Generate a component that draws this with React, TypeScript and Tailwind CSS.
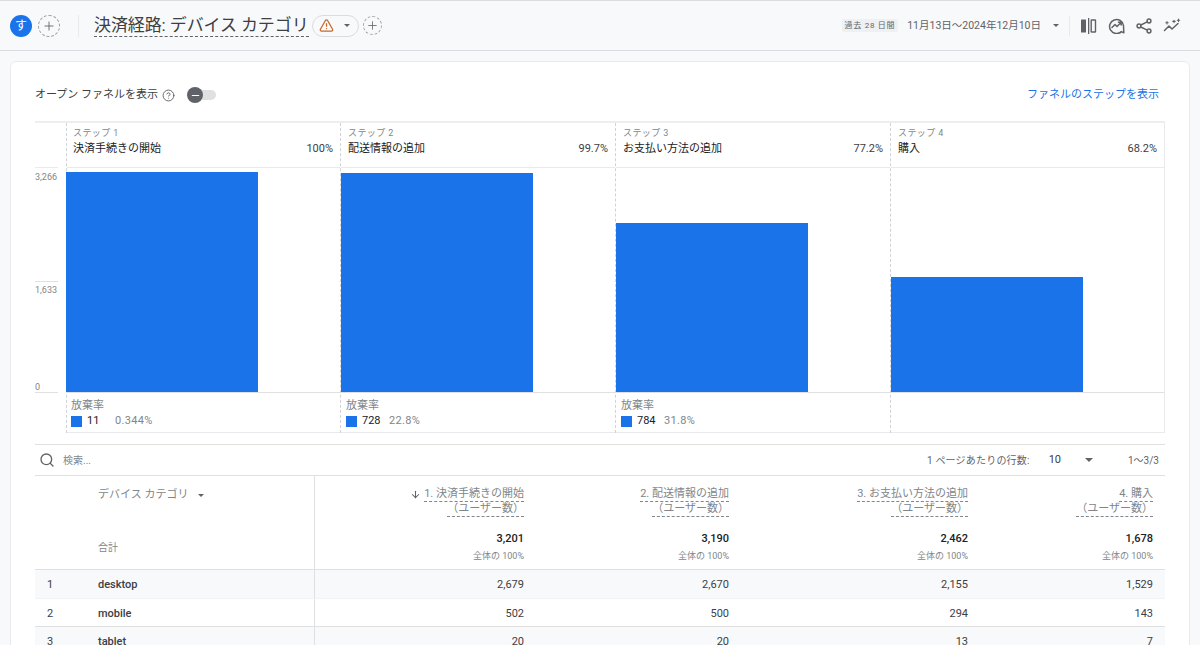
import React from "react";
import { Search, ArrowDown, Plus, TriangleAlert, CircleHelp, Minus } from "lucide-react";

const steps = [
  { no: 1, name: "決済手続きの開始", pct: "100%", top: 4, col: "w-[274px]", bar: "-ml-px", head: "pl-[6px]", foot: "pl-[4px]", gap: "ml-px", drop: { n: "11", p: "0.344%" } },
  { no: 2, name: "配送情報の追加", pct: "99.7%", top: 5, col: "w-[275px]", bar: "", head: "pl-[7px]", foot: "pl-[5px]", gap: "", drop: { n: "728", p: "22.8%" } },
  { no: 3, name: "お支払い方法の追加", pct: "77.2%", top: 55, col: "w-[275px]", bar: "", head: "pl-[7px]", foot: "pl-[5px]", gap: "", drop: { n: "784", p: "31.8%" } },
  { no: 4, name: "購入", pct: "68.2%", top: 109, col: "flex-1", bar: "", head: "pl-[7px]", foot: "pl-[5px]", gap: "", drop: null },
];

const rows = [
  { rank: 1, name: "desktop", vals: ["2,679", "2,670", "2,155", "1,529"], cls: "bg-[#f8f9fa] h-[29px] border-b border-[#f1f3f4]" },
  { rank: 2, name: "mobile", vals: ["502", "500", "294", "143"], cls: "bg-white h-[28px] border-b border-[#e0e0e0]" },
  { rank: 3, name: "tablet", vals: ["20", "20", "13", "7"], cls: "bg-[#f8f9fa] h-[28px]" },
];

const columns = [
  { title: "1. 決済手続きの開始", total: "3,201", sorted: true },
  { title: "2. 配送情報の追加", total: "3,190", sorted: false },
  { title: "3. お支払い方法の追加", total: "2,462", sorted: false },
  { title: "4. 購入", total: "1,678", sorted: false },
];

const Caret = ({ className = "" }: { className?: string }) => (
  <span className={`inline-block w-0 h-0 border-x-[4px] border-x-transparent border-t-[4px] border-t-[#5f6368] ${className}`} />
);

const SmallCaret = ({ className = "" }: { className?: string }) => (
  <span className={`inline-block w-0 h-0 border-x-[3px] border-x-transparent border-t-[3px] border-t-[#5f6368] ${className}`} />
);

const gridCols = "grid grid-cols-[280px_209px_205px_239px_185px] pr-3";

export default function App() {
  return (
    <div className="w-[1200px] h-[645px] overflow-hidden bg-[#f8f9fa] font-['Roboto','Noto_Sans_CJK_JP',sans-serif] text-[#3c4043]">
      {/* Header */}
      <header className="h-[51px] border-b border-t border-[#dadce0] flex items-center pl-[10px] pr-[19px]">
        <div className="w-[22px] h-[22px] rounded-full bg-[#1a73e8] text-white text-[12px] flex items-center justify-center">す</div>
        <div className="ml-[6px] w-[22px] h-[22px] rounded-full border border-dashed border-[#9aa0a6] flex items-center justify-center">
          <Plus className="w-[14px] h-[14px] text-[#5f6368]" strokeWidth={1.5} />
        </div>
        <div className="ml-[18px] w-px h-[22px] bg-[#e8eaed]" />
        <h1 className="ml-[15px] text-[17px] leading-[22px] tracking-[-0.1px] text-[#3c4043] border-b border-dashed border-[#5f6368] whitespace-nowrap">決済経路: デバイス カテゴリ</h1>
        <div className="ml-[3px] w-[47px] h-[22px] rounded-full border border-[#dadce0] flex items-center pl-[6px] gap-[10px]">
          <TriangleAlert className="w-[15px] h-[15px] text-[#c4682c]" strokeWidth={2} />
          <SmallCaret />
        </div>
        <div className="ml-[4px] w-[19px] h-[19px] rounded-full border border-dashed border-[#9aa0a6] flex items-center justify-center">
          <Plus className="w-[13px] h-[13px] text-[#5f6368]" strokeWidth={1.5} />
        </div>
        <div className="ml-auto flex items-center">
          <span className="bg-[#eff0f2] rounded-[2px] px-[3px] text-[8px] leading-[13px] text-[#5f6368] tracking-[0.7px] whitespace-nowrap">過去 28 日間</span>
          <span className="ml-[9px] text-[10.5px] text-[#5f6368] whitespace-nowrap">11月13日～2024年12月10日</span>
          <SmallCaret className="ml-[12px]" />
          <div className="ml-[10px] w-px h-[20px] bg-[#e8eaed]" />
          <div className="ml-[10px] flex items-center gap-[11px] text-[#5f6368]">
            <svg width="17" height="16" viewBox="0 0 17 16" fill="none">
              <rect x="1" y="1.5" width="5" height="13" rx="0.5" fill="#5f6368" />
              <rect x="8" y="0" width="1.3" height="16" fill="#5f6368" />
              <rect x="11.2" y="2" width="4.3" height="12" rx="0.5" stroke="#5f6368" strokeWidth="1.4" />
            </svg>
            <svg width="17" height="17" viewBox="0 0 17 17" fill="none" stroke="#5f6368" strokeWidth="1.5">
              <path d="M15.8 15.8 L13.4 14.6 A7 7 0 1 1 15.5 8.5 Z" strokeLinejoin="round" />
              <path d="M4 10.5 L7 7.5 L9 9.5 L13 5.5 M10.5 5.2 H13.2 V8" strokeLinecap="round" strokeLinejoin="round" />
            </svg>
            <svg width="16" height="16" viewBox="0 0 16 16" fill="none" stroke="#5f6368" strokeWidth="1.5">
              <circle cx="13" cy="3" r="1.9" />
              <circle cx="3" cy="8" r="1.9" />
              <circle cx="13" cy="13" r="1.9" />
              <path d="M4.8 7 L11.2 3.9 M4.8 9 L11.2 12.1" />
            </svg>
            <svg width="18" height="16" viewBox="0 0 18 16" fill="none" stroke="#5f6368" strokeWidth="1.5" strokeLinecap="round" strokeLinejoin="round">
              <path d="M1.5 12.5 L6 8 L9 11 L15 5.5" />
              <path d="M4 3.5 v2.4 M2.8 4.7 h2.4 M11 2.2 v2.4 M9.8 3.4 h2.4 M15.5 1 v2.4 M14.3 2.2 h2.4" strokeWidth="1.1" />
            </svg>
          </div>
        </div>
      </header>

      {/* Card */}
      <main className="mx-[10px] mt-[10px] bg-white border border-[#e8eaed] rounded-t-[6px] px-[24px] h-[600px]">
        <div className="h-[60px] flex items-center justify-between">
          <div className="flex items-center mt-[6px]">
            <span className="text-[11px] text-[#3c4043]">オープン ファネルを表示</span>
            <CircleHelp className="ml-[4px] w-[13px] h-[13px] text-[#5f6368]" strokeWidth={1.75} />
            <div className="ml-[13px] relative w-[28px] h-[10px] rounded-full bg-[#e0e0e0]">
              <div className="absolute -left-px -top-[3px] w-4 h-4 rounded-full bg-[#5f6368] flex items-center justify-center">
                <Minus className="w-[11px] h-[11px] text-white" strokeWidth={2.5} />
              </div>
            </div>
          </div>
          <span className="mt-[6px] mr-[6px] text-[11px] text-[#1a73e8]">ファネルのステップを表示</span>
        </div>

        {/* Funnel chart */}
        <div className="flex border-t-2 border-[#eeeeee] -mt-px">
          <div className="w-[31px] shrink-0 flex flex-col">
            <div className="h-[45px] mr-2 border-b border-[#e8eaed]" />
            <div className="h-[225px] relative text-[9px] text-[#80868b]">
              <div className="absolute left-0 top-[3px]">3,266</div>
              <div className="absolute left-0 right-2 top-[113px] border-t border-[#e0e0e0]" />
              <div className="absolute left-0 top-[116px]">1,633</div>
              <div className="absolute left-0 -bottom-px">0</div>
              <div className="absolute left-0 right-2 bottom-0 border-t border-[#e0e0e0]" />
            </div>
          </div>
          <div className="flex-1 flex border-r border-[#e8eaed]">
            {steps.map((s) => (
              <div key={s.no} className={`${s.col} min-w-0 flex flex-col border-l border-dashed border-[#cfd2d6]`}>
                <div className={`h-[45px] border-b border-[#e8eaed] pr-[7px] ${s.head}`}>
                  <div className="text-[9px] leading-[12px] pt-[4px] text-[#80868b] tracking-[0.4px] box-content">ステップ {s.no}</div>
                  <div className="flex justify-between text-[11px] leading-[16px] mt-[2px] text-[#202124]">
                    <span>{s.name}</span>
                    <span className="text-[#3c4043]">{s.pct}</span>
                  </div>
                </div>
                <div className="h-[225px] border-b border-[#e0e0e0] flex flex-col justify-end">
                  <div className={`w-[192px] bg-[#1a73e8] ${s.bar}`} style={{ height: 225 - s.top - 1 }} />
                </div>
                <div className={`h-[40px] border-b border-[#e8eaed] ${s.foot}`}>
                  {s.drop && (
                    <>
                      <div className="text-[11px] leading-[14px] pt-[6px] text-[#80868b]">放棄率</div>
                      <div className="flex items-center mt-[2px] h-[12px] text-[11px]">
                        <span className="w-[11px] h-[11px] bg-[#1a73e8]" />
                        <span className="ml-[5px] w-[27px] text-[#202124]">{s.drop.n}</span>
                        <span className={`text-[#80868b] tracking-[0.3px] ${s.gap}`}>{s.drop.p}</span>
                      </div>
                    </>
                  )}
                </div>
              </div>
            ))}
          </div>
        </div>

        {/* Search / pagination */}
        <div className="mt-[11px] h-[32px] border-y border-[#e0e0e0] flex items-center pl-[4px] pr-[6px]">
          <Search className="w-[16px] h-[16px] text-[#5f6368]" strokeWidth={2} />
          <span className="ml-[8px] text-[10px] text-[#80868b]">検索...</span>
          <span className="ml-auto text-[10px] text-[#5f6368] tracking-[0.2px]">1 ページあたりの行数:</span>
          <span className="ml-[19px] text-[11px] text-[#3c4043]">10</span>
          <Caret className="ml-[24px]" />
          <span className="ml-[35px] text-[10px] text-[#5f6368]">1～3/3</span>
        </div>

        {/* Table */}
        <div className="text-[11px]">
          <div className={`${gridCols} h-[94px] border-b border-[#e0e0e0]`}>
            <div className="border-r border-[#e0e0e0] pl-[63px] flex flex-col">
              <div className="mt-[12px] h-[14px] flex items-center text-[11px] text-[#80868b]">
                デバイス カテゴリ
                <SmallCaret className="ml-[10px]" />
              </div>
              <div className="mt-[38px] text-[10px] text-[#80868b]">合計</div>
            </div>
            {columns.map((c) => (
              <div key={c.title} className="flex flex-col items-end text-[#80868b]">
                <div className="mt-[11px] flex items-center leading-[14px]">
                  {c.sorted && <ArrowDown className="w-[11px] h-[11px] mr-[3px] text-[#5f6368]" strokeWidth={2.25} />}
                  <span className="border-b border-dashed border-[#80868b] leading-[14px]">{c.title}</span>
                </div>
                <span className="border-b border-dashed border-[#80868b] leading-[14px]">（ユーザー数）</span>
                <div className="mt-[15px] text-[11px] leading-[14px] font-medium text-[#202124]">{c.total}</div>
                <div className="mt-[4px] text-[9px] leading-[12px] text-[#80868b]">全体の 100%</div>
              </div>
            ))}
          </div>
          {rows.map((r) => (
            <div key={r.rank} className={`${gridCols} ${r.cls}`}>
              <div className="border-r border-[#e0e0e0] flex items-center font-medium text-[#3c4043] pt-[3px]">
                <span className="w-[63px] pl-[12px] font-normal">{r.rank}</span>
                <span>{r.name}</span>
              </div>
              {r.vals.map((v, i) => (
                <div key={i} className="flex items-center justify-end text-[#3c4043] pt-[3px]">{v}</div>
              ))}
            </div>
          ))}
        </div>
      </main>
    </div>
  );
}
